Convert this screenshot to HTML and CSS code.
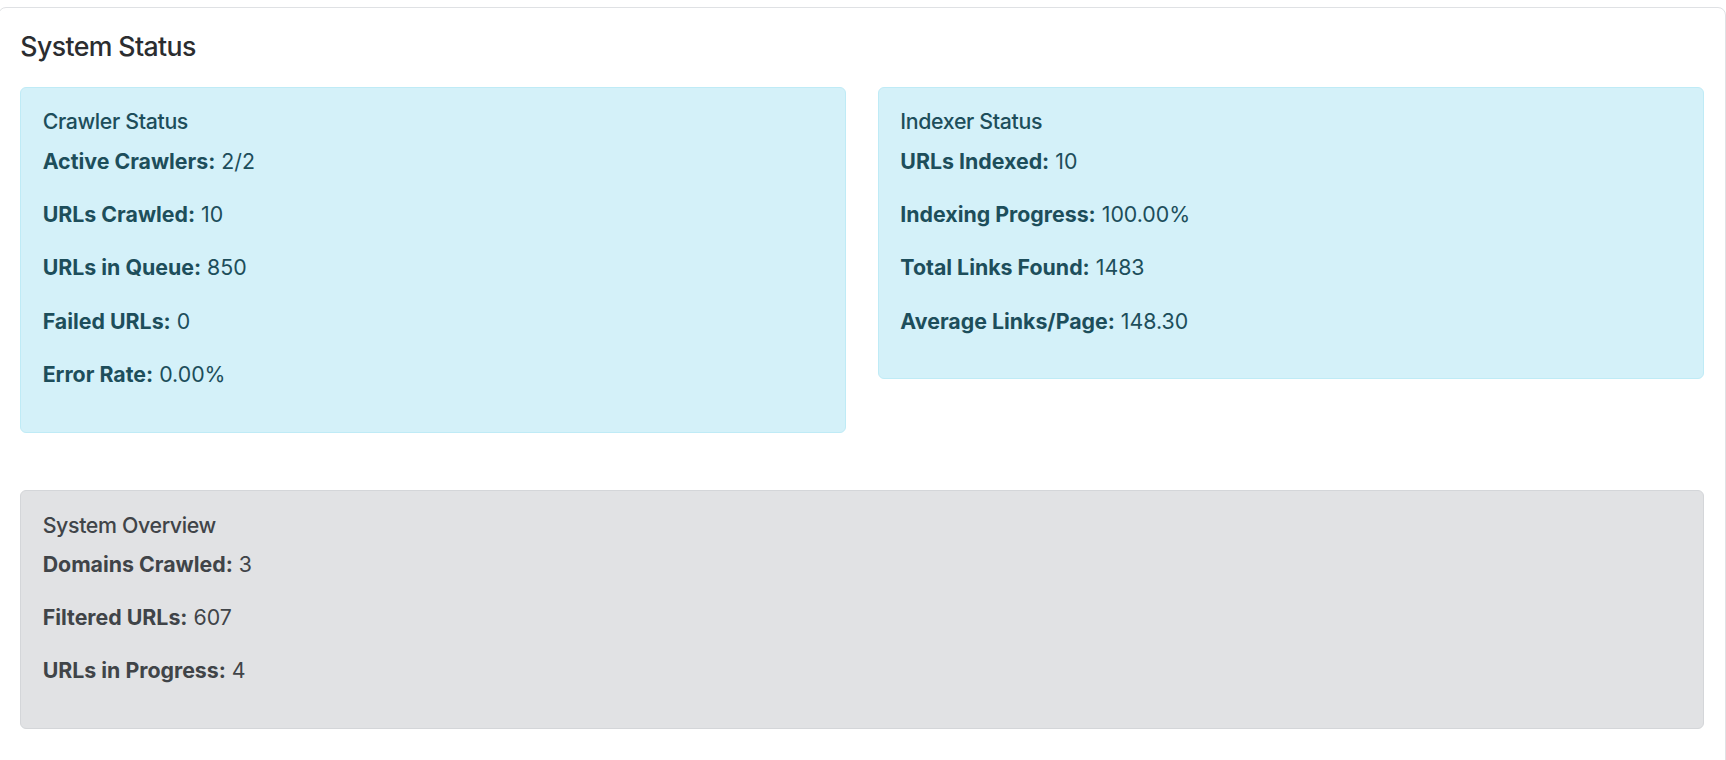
FILE: index.html
```html
<!DOCTYPE html>
<html lang="en">
<head>
<meta charset="utf-8">
<title>System Status</title>
<link rel="stylesheet" href="styles.css">
</head>
<body>
<div class="panel">
  <div class="panel-body">
    <h5 class="panel-title">System Status</h5>
    <div class="status-grid">
      <div class="box box-info">
        <h6 class="box-title">Crawler Status</h6>
        <p><strong>Active Crawlers:</strong> 2/2</p>
        <p><strong>URLs Crawled:</strong> 10</p>
        <p><strong>URLs in Queue:</strong> 850</p>
        <p><strong>Failed URLs:</strong> 0</p>
        <p><strong>Error Rate:</strong> 0.00%</p>
      </div>
      <div class="box box-info">
        <h6 class="box-title">Indexer Status</h6>
        <p><strong>URLs Indexed:</strong> 10</p>
        <p><strong>Indexing Progress:</strong> 100.00%</p>
        <p><strong>Total Links Found:</strong> 1483</p>
        <p><strong>Average Links/Page:</strong> 148.30</p>
      </div>
    </div>
    <div class="box box-gray overview">
      <h6 class="box-title">System Overview</h6>
      <p><strong>Domains Crawled:</strong> 3</p>
      <p><strong>Filtered URLs:</strong> 607</p>
      <p><strong>URLs in Progress:</strong> 4</p>
    </div>
  </div>
</div>
</body>
</html>
```

FILE: styles.css
```css
html, body {
  margin: 0;
  padding: 0;
  background: #ffffff;
}

body {
  font-family: Inter, "Noto Sans", "Liberation Sans", sans-serif;
  font-size: 21.33px;
  line-height: 1.5;
  color: #212529;
}

.panel {
  margin: 7px 0 0 -2px;
  width: 1726px;
  border: 1px solid #dfe1e4;
  border-radius: 8px;
  background: #fff;
}

.panel-body {
  padding: 21.33px 21.33px 40px;
}

.panel-title {
  margin: 0 0 24.7px;
  font-size: 26.67px;
  font-weight: 500;
  line-height: 1.2;
  letter-spacing: -0.6px;
  color: #2b2d30;
  padding-top: 1px;
}

.status-grid {
  display: grid;
  grid-template-columns: 1fr 1fr;
  column-gap: 32px;
  align-items: start;
}

.box {
  border: 1px solid transparent;
  border-radius: 6px;
  padding: 21.33px 21.33px 19.5px;
}

.box-info {
  background: #d4f1f9;
  border-color: #bfebf6;
  color: #1d4e5b;
}

.box-gray {
  background: #e1e2e4;
  border-color: #d4d6d9;
  color: #404448;
}

.overview {
  margin-top: 57.6px;
}

.box-title {
  margin: 0 0 10.67px;
  font-size: 21.33px;
  font-weight: 500;
  line-height: 1.2;
  letter-spacing: -0.35px;
}

.box p {
  margin: 0 0 21.33px;
}

.box strong {
  font-weight: 700;
}
```
